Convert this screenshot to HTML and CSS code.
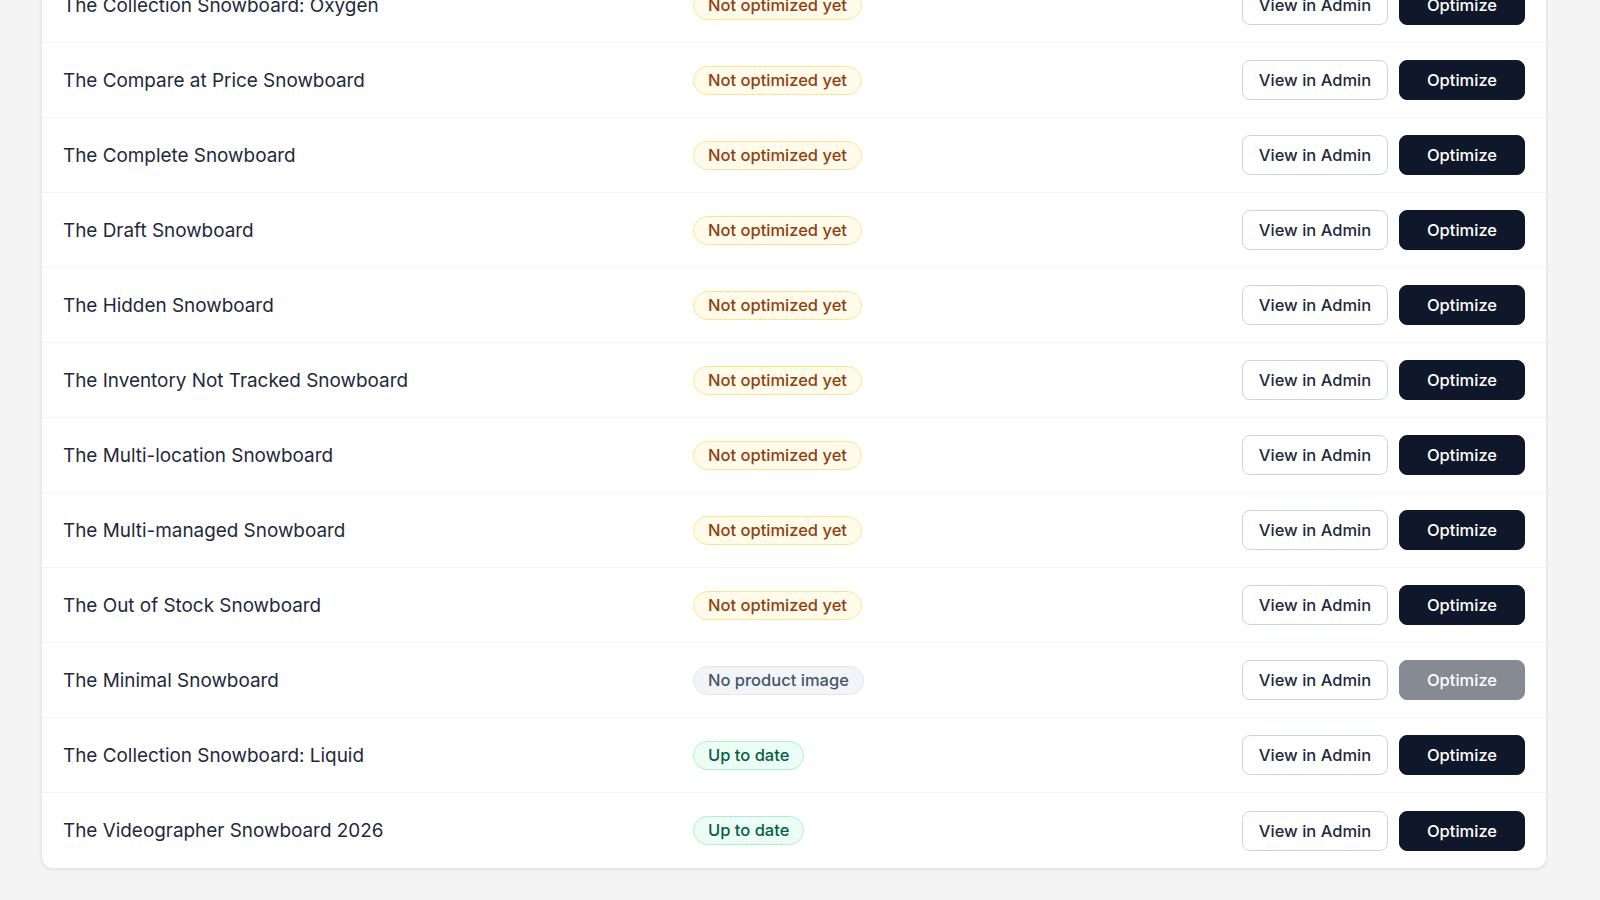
FILE: index.html
```html
<!DOCTYPE html>
<html lang="en">
<head>
  <meta charset="UTF-8" />
  <meta name="viewport" content="width=device-width, initial-scale=1.0"/>
  <title>Products</title>
  <link rel="stylesheet" href="styles.css">
</head>
<body>
  <div class="product-card">

    <div class="product-row">
      <div class="product-name">The Collection Snowboard: Oxygen</div>
      <div><span class="badge badge-pending">Not optimized yet</span></div>
      <div class="actions">
        <button class="btn btn-outline">View in Admin</button>
        <button class="btn btn-dark">Optimize</button>
      </div>
    </div>

    <div class="product-row">
      <div class="product-name">The Compare at Price Snowboard</div>
      <div><span class="badge badge-pending">Not optimized yet</span></div>
      <div class="actions">
        <button class="btn btn-outline">View in Admin</button>
        <button class="btn btn-dark">Optimize</button>
      </div>
    </div>

    <div class="product-row">
      <div class="product-name">The Complete Snowboard</div>
      <div><span class="badge badge-pending">Not optimized yet</span></div>
      <div class="actions">
        <button class="btn btn-outline">View in Admin</button>
        <button class="btn btn-dark">Optimize</button>
      </div>
    </div>

    <div class="product-row">
      <div class="product-name">The Draft Snowboard</div>
      <div><span class="badge badge-pending">Not optimized yet</span></div>
      <div class="actions">
        <button class="btn btn-outline">View in Admin</button>
        <button class="btn btn-dark">Optimize</button>
      </div>
    </div>

    <div class="product-row">
      <div class="product-name">The Hidden Snowboard</div>
      <div><span class="badge badge-pending">Not optimized yet</span></div>
      <div class="actions">
        <button class="btn btn-outline">View in Admin</button>
        <button class="btn btn-dark">Optimize</button>
      </div>
    </div>

    <div class="product-row">
      <div class="product-name">The Inventory Not Tracked Snowboard</div>
      <div><span class="badge badge-pending">Not optimized yet</span></div>
      <div class="actions">
        <button class="btn btn-outline">View in Admin</button>
        <button class="btn btn-dark">Optimize</button>
      </div>
    </div>

    <div class="product-row">
      <div class="product-name">The Multi-location Snowboard</div>
      <div><span class="badge badge-pending">Not optimized yet</span></div>
      <div class="actions">
        <button class="btn btn-outline">View in Admin</button>
        <button class="btn btn-dark">Optimize</button>
      </div>
    </div>

    <div class="product-row">
      <div class="product-name">The Multi-managed Snowboard</div>
      <div><span class="badge badge-pending">Not optimized yet</span></div>
      <div class="actions">
        <button class="btn btn-outline">View in Admin</button>
        <button class="btn btn-dark">Optimize</button>
      </div>
    </div>

    <div class="product-row">
      <div class="product-name">The Out of Stock Snowboard</div>
      <div><span class="badge badge-pending">Not optimized yet</span></div>
      <div class="actions">
        <button class="btn btn-outline">View in Admin</button>
        <button class="btn btn-dark">Optimize</button>
      </div>
    </div>

    <div class="product-row">
      <div class="product-name">The Minimal Snowboard</div>
      <div><span class="badge badge-muted">No product image</span></div>
      <div class="actions">
        <button class="btn btn-outline">View in Admin</button>
        <button class="btn btn-dark" disabled>Optimize</button>
      </div>
    </div>

    <div class="product-row">
      <div class="product-name">The Collection Snowboard: Liquid</div>
      <div><span class="badge badge-done">Up to date</span></div>
      <div class="actions">
        <button class="btn btn-outline">View in Admin</button>
        <button class="btn btn-dark">Optimize</button>
      </div>
    </div>

    <div class="product-row">
      <div class="product-name">The Videographer Snowboard 2026</div>
      <div><span class="badge badge-done">Up to date</span></div>
      <div class="actions">
        <button class="btn btn-outline">View in Admin</button>
        <button class="btn btn-dark">Optimize</button>
      </div>
    </div>

  </div>
</body>
</html>
```

FILE: styles.css
```css
* {
  box-sizing: border-box;
}

body {
  margin: 0;
  font-family: Inter, 'Noto Sans', sans-serif;
  background: #f4f4f5;
  color: #1e293b;
  padding-bottom: 32px;
}

.product-card {
  margin: -32px 0 0 41px;
  width: 1506px;
  background: #fff;
  border: 1px solid #e5e7eb;
  border-top: none;
  border-radius: 0 0 12px 12px;
  box-shadow: 0 1px 3px rgba(15, 23, 42, 0.08);
}

.product-row {
  display: grid;
  grid-template-columns: 630px 1fr auto;
  align-items: center;
  height: 75px;
  padding: 0 21px;
  border-bottom: 1px solid #f1f5f9;
}

.product-row:last-child {
  border-bottom: none;
}

.product-name {
  font-size: 18.9px;
  color: #1e293b;
}

.badge {
  display: inline-block;
  font-size: 16.5px;
  font-weight: 500;
  line-height: 27px;
  padding: 0 14px;
  border-radius: 999px;
  border: 1px solid transparent;
}

.badge-pending {
  background: #fffbeb;
  border-color: #fde68a;
  color: #92400e;
}

.badge-muted {
  background: #f1f5f9;
  border-color: #e2e8f0;
  color: #475569;
}

.badge-done {
  background: #ecfdf5;
  border-color: #a7f3d0;
  color: #065f46;
}

.actions {
  display: flex;
  gap: 11px;
}

.btn {
  font-family: inherit;
  font-size: 16.5px;
  font-weight: 500;
  height: 40px;
  border-radius: 8px;
  cursor: pointer;
}

.btn-outline {
  width: 146px;
  background: #fff;
  color: #1e293b;
  border: 1px solid #cbd5e1;
}

.btn-dark {
  width: 126px;
  background: #0f172a;
  color: #fff;
  border: 1px solid #0f172a;
}

.btn-dark:disabled {
  opacity: 0.5;
  cursor: not-allowed;
}
```
